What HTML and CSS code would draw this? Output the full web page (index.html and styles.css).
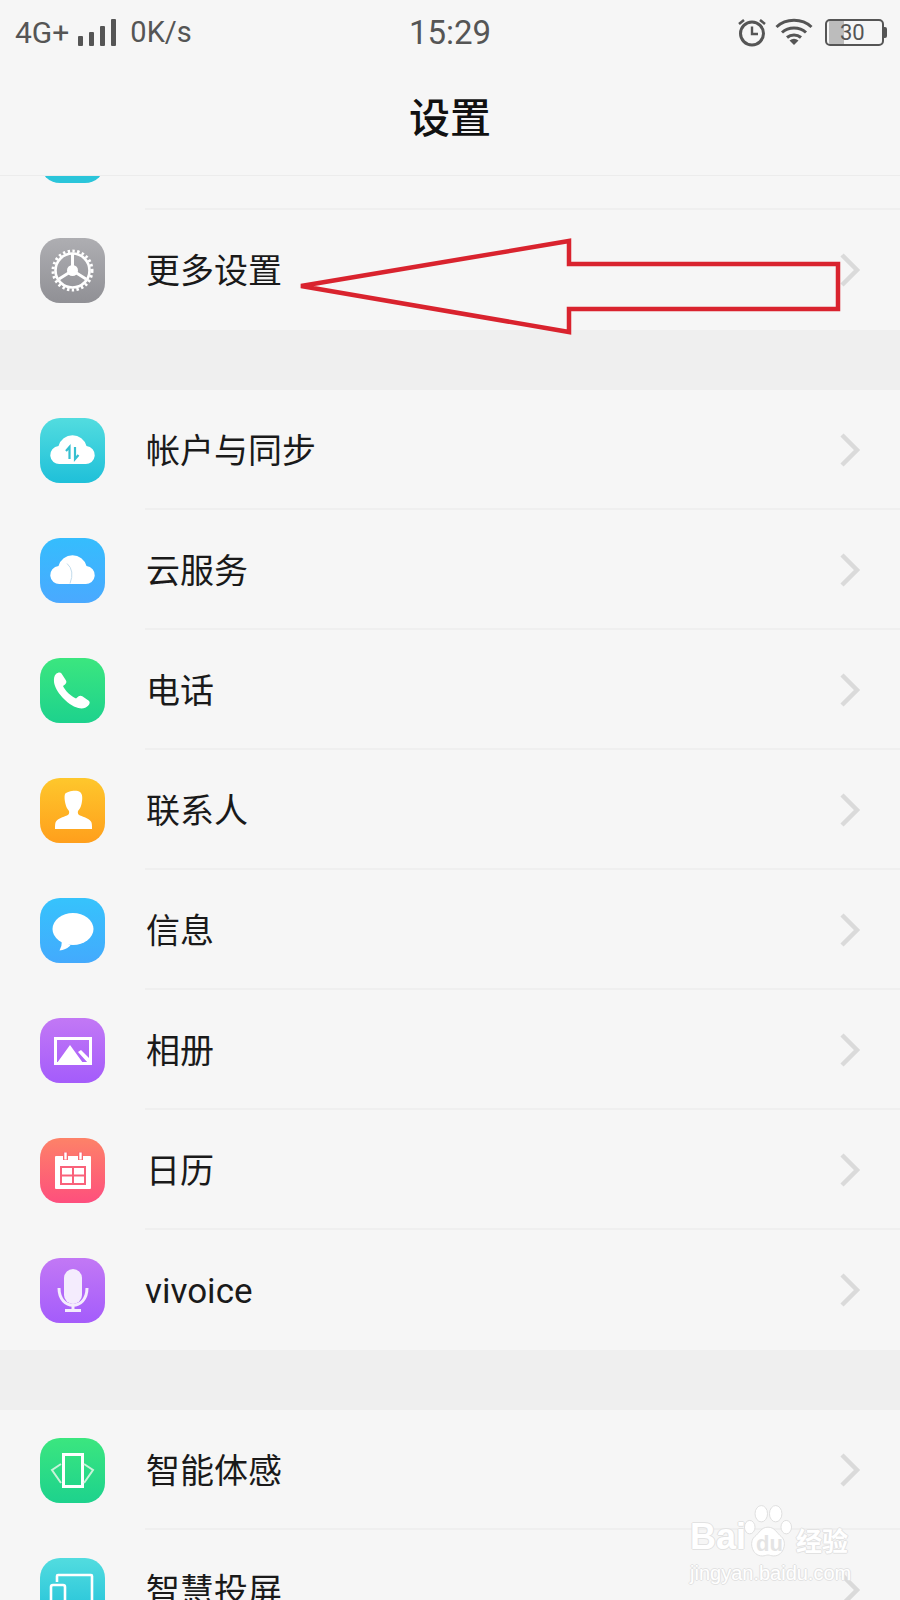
FILE: index.html
```html
<!DOCTYPE html>
<html>
  <head>
    <title>设置</title>
    <link rel="stylesheet" href="styles.css">
  </head>
  <body>
    <div class="screen">
      <div class="status-bar">
        <div class="status-left">
          <span class="net-type">4G+</span>
          <div class="signal">
            <i class="bar bar1"></i>
            <i class="bar bar2"></i>
            <i class="bar bar3"></i>
            <i class="bar bar4"></i>
          </div>
          <span class="net-speed">0K/s</span>
        </div>
        <div class="clock">15:29</div>
        <div class="status-right">
          <svg class="alarm" width="30" height="30" viewBox="0 0 30 30">
            <circle cx="15" cy="16.5" r="11.5" fill="none" stroke="#555" stroke-width="3"/>
            <path d="M15 9.5v7.5h6" fill="none" stroke="#555" stroke-width="2.4"/>
            <path d="M2 7l5-4M28 7l-5-4" fill="none" stroke="#555" stroke-width="2.6"/>
          </svg>
          <svg class="wifi" width="38" height="28" viewBox="0 0 38 28">
            <path d="M1.5 9C11 0 27 0 36.5 9" fill="none" stroke="#555" stroke-width="3"/>
            <path d="M7 14.5C13.5 8.5 24.5 8.5 31 14.5" fill="none" stroke="#555" stroke-width="3"/>
            <path d="M12 19.5C16 16 22 16 26 19.5" fill="none" stroke="#555" stroke-width="3"/>
            <path d="M14.5 22.5Q19 19 23.5 22.5L19 27z" fill="#555"/>
          </svg>
          <div class="battery">
            <div class="battery-body">
              <div class="battery-fill"></div>
              <span class="battery-num">30</span>
            </div>
            <div class="battery-cap"></div>
          </div>
        </div>
      </div>

      <div class="title-bar">设置</div>

      <div class="scroll-area">
        <div class="section first-section">
          <div class="row">
            <div class="icon icon-teal"></div>
            <div class="row-label"></div>
          </div>
          <div class="row last-row">
            <div class="icon icon-gray">
              <svg width="65" height="65" viewBox="0 0 65 65">
                <circle cx="32.5" cy="32.5" r="17" fill="none" stroke="#fff" stroke-width="2.6"/>
                <circle cx="32.5" cy="32.5" r="19.5" fill="none" stroke="#fff" stroke-width="3" stroke-dasharray="2.4 2.4"/>
                <path d="M32.5 16v16.5M32.5 32.5L19 41M32.5 32.5L46 41" fill="none" stroke="#fff" stroke-width="3"/>
                <circle cx="32.5" cy="32.5" r="5.5" fill="#fff"/>
              </svg>
            </div>
            <div class="row-label">更多设置</div>
            <svg class="chevron" width="22" height="36" viewBox="0 0 22 36"><path d="M3 3l15 15L3 33" fill="none" stroke="#dadada" stroke-width="4.5"/></svg>
          </div>
        </div>

        <div class="section">
          <div class="row">
            <div class="icon icon-aqua">
              <svg width="65" height="65" viewBox="0 0 65 65">
                <path d="M20 46a9 9 0 0 1-1.5-18 14.5 14.5 0 0 1 28 0 9 9 0 0 1-1.5 18z" fill="#fff"/>
                <path d="M29.5 41V29l-3.500 4M35 29v12l3.500-4" fill="none" stroke="#35bfd0" stroke-width="2.2"/>
              </svg>
            </div>
            <div class="row-label">帐户与同步</div>
            <svg class="chevron" width="22" height="36" viewBox="0 0 22 36"><path d="M3 3l15 15L3 33" fill="none" stroke="#dadada" stroke-width="4.5"/></svg>
          </div>
          <div class="row">
            <div class="icon icon-sky">
              <svg width="65" height="65" viewBox="0 0 65 65">
                <path d="M20 46a9 9 0 0 1-1.5-18 14.5 14.5 0 0 1 28 0 9 9 0 0 1-1.5 18z" fill="#fff"/>
                <path d="M27 25.5q8 7 3 20" fill="none" stroke="#c3dcec" stroke-width="1"/>
              </svg>
            </div>
            <div class="row-label">云服务</div>
            <svg class="chevron" width="22" height="36" viewBox="0 0 22 36"><path d="M3 3l15 15L3 33" fill="none" stroke="#dadada" stroke-width="4.5"/></svg>
          </div>
          <div class="row">
            <div class="icon icon-green">
              <svg width="65" height="65" viewBox="0 0 65 65">
                <path d="M16 16c2-1.800 4.500-2 5.500-.5l4.500 7c.8 1.400.3 2.800-1 4l-2 1.500c2 4.500 8 10.500 13 12.500l2.300-2c1.200-1 2.800-1.200 4-.3l6.500 4.500c1.300 1 1.200 3-.5 4.800-2.500 2.700-6 3.500-10 2.500C27 47 15 33 14 24c-.2-3.500 0-6 2-8z" fill="#fff"/>
              </svg>
            </div>
            <div class="row-label">电话</div>
            <svg class="chevron" width="22" height="36" viewBox="0 0 22 36"><path d="M3 3l15 15L3 33" fill="none" stroke="#dadada" stroke-width="4.5"/></svg>
          </div>
          <div class="row">
            <div class="icon icon-orange">
              <svg width="65" height="65" viewBox="0 0 65 65">
                <path d="M25 16c2-3 12-4.500 15-2 3 2 2.500 8 1.500 12-.5 3-2 5-3.500 7-.5 2 0 3.500 2 4.500 4 1.500 9 3 11 6 1 1.500 1 4 1 7.500H15c0-3.500 0-6 1-7.500 2-3 7-4.500 11-6 2-1 2.500-2.500 2-4.500-1.500-2-3-4-3.500-7C25 24 24 19 25 16z" fill="#fff"/>
              </svg>
            </div>
            <div class="row-label">联系人</div>
            <svg class="chevron" width="22" height="36" viewBox="0 0 22 36"><path d="M3 3l15 15L3 33" fill="none" stroke="#dadada" stroke-width="4.5"/></svg>
          </div>
          <div class="row">
            <div class="icon icon-blue">
              <svg width="65" height="65" viewBox="0 0 65 65">
                <ellipse cx="33" cy="31" rx="20.5" ry="16" fill="#fff"/>
                <path d="M22 42q0 6-2.500 10.500 6-.5 11-5z" fill="#fff"/>
              </svg>
            </div>
            <div class="row-label">信息</div>
            <svg class="chevron" width="22" height="36" viewBox="0 0 22 36"><path d="M3 3l15 15L3 33" fill="none" stroke="#dadada" stroke-width="4.5"/></svg>
          </div>
          <div class="row">
            <div class="icon icon-violet">
              <svg width="65" height="65" viewBox="0 0 65 65">
                <path d="M15.5 20.5h35v25h-35z" fill="none" stroke="#fff" stroke-width="3"/>
                <path d="M17 45l13-18 13 18zM38 34l3-2 8 8v5h-1z" fill="#fff"/>
              </svg>
            </div>
            <div class="row-label">相册</div>
            <svg class="chevron" width="22" height="36" viewBox="0 0 22 36"><path d="M3 3l15 15L3 33" fill="none" stroke="#dadada" stroke-width="4.5"/></svg>
          </div>
          <div class="row">
            <div class="icon icon-red">
              <svg width="65" height="65" viewBox="0 0 65 65">
                <path d="M16 18h34a1 1 0 0 1 1 1v31a1 1 0 0 1-1 1H16a1 1 0 0 1-1-1V19a1 1 0 0 1 1-1z" fill="#fff"/>
                <path d="M25.5 14v8M40.5 14v8" stroke="#f9686f" stroke-width="5"/>
                <path d="M25.5 14.500v7M40.5 14.500v7" stroke="#fff" stroke-width="2.4"/>
                <path d="M20 28h26v19H20z" fill="#f9627a"/>
                <path d="M22 30h10v6.500H22zM34 30h10v6.500H34zM22 38.500h10V45H22zM34 38.500h10V45H34z" fill="#fff"/>
              </svg>
            </div>
            <div class="row-label">日历</div>
            <svg class="chevron" width="22" height="36" viewBox="0 0 22 36"><path d="M3 3l15 15L3 33" fill="none" stroke="#dadada" stroke-width="4.5"/></svg>
          </div>
          <div class="row last-row">
            <div class="icon icon-violet">
              <svg width="65" height="65" viewBox="0 0 65 65">
                <rect x="24" y="11" width="18" height="35" rx="9" fill="#f4ecfd"/>
                <path d="M19 30c0 23 28 23 28 0" fill="none" stroke="#f4ecfd" stroke-width="3"/>
                <path d="M33 47v5M25 52.500h16" fill="none" stroke="#f4ecfd" stroke-width="3"/>
              </svg>
            </div>
            <div class="row-label latin">vivoice</div>
            <svg class="chevron" width="22" height="36" viewBox="0 0 22 36"><path d="M3 3l15 15L3 33" fill="none" stroke="#dadada" stroke-width="4.5"/></svg>
          </div>
        </div>

        <div class="section">
          <div class="row">
            <div class="icon icon-green">
              <svg width="65" height="65" viewBox="0 0 65 65">
                <rect x="23.5" y="16.5" width="19" height="32" fill="none" stroke="#fff" stroke-width="3"/>
                <path d="M21 26l-9 6 9 13M44 26l9 6-9 13" fill="none" stroke="#c8f3d9" stroke-width="2"/>
              </svg>
            </div>
            <div class="row-label">智能体感</div>
            <svg class="chevron" width="22" height="36" viewBox="0 0 22 36"><path d="M3 3l15 15L3 33" fill="none" stroke="#dadada" stroke-width="4.5"/></svg>
          </div>
          <div class="row">
            <div class="icon icon-aqua">
              <svg width="65" height="65" viewBox="0 0 65 65">
                <path d="M17 24v-6a1 1 0 0 1 1-1h33a1 1 0 0 1 1 1v27h-23" fill="none" stroke="#fff" stroke-width="2.6"/>
                <rect x="11" y="27" width="14" height="26" rx="2" fill="none" stroke="#fff" stroke-width="2.6"/>
              </svg>
            </div>
            <div class="row-label">智慧投屏</div>
            <svg class="chevron" width="22" height="36" viewBox="0 0 22 36"><path d="M3 3l15 15L3 33" fill="none" stroke="#dadada" stroke-width="4.5"/></svg>
          </div>
        </div>
      </div>

      <svg class="red-arrow" width="900" height="340" viewBox="0 0 900 340">
        <path d="M301 286L569 241V264H838V309H569V332z" fill="none" stroke="#d9232e" stroke-width="4.5"/>
      </svg>

      <div class="watermark">
        <div class="wm-top">
          <span class="wm-bai">Bai</span>
          <svg class="wm-paw" width="48" height="52" viewBox="0 0 50 54">
            <g fill="#fff" stroke="#dedede" stroke-width="1">
              <ellipse cx="6" cy="23" rx="5.5" ry="7"/>
              <ellipse cx="18" cy="9" rx="6.5" ry="8.5"/>
              <ellipse cx="33" cy="9" rx="6.5" ry="8.5"/>
              <ellipse cx="44" cy="23" rx="5.5" ry="7"/>
              <path d="M25 23c7 0 9 6 14 10 6 5 3 20-8 20-3 0-4-1-6-1s-3 1-6 1C8 53 5 38 11 33c5-4 7-10 14-10z"/>
            </g>
          </svg>
          <span class="wm-du">du</span>
          <span class="wm-jy">经验</span>
        </div>
        <div class="wm-url">jingyan.baidu.com</div>
      </div>
    </div>
  </body>
</html>
```

FILE: styles.css
```css
html,
body {
  margin: 0;
  padding: 0;
}

body {
  font-family: "Noto Sans CJK SC", "Noto Sans", sans-serif;
  background-color: #f6f6f6;
}

.screen {
  position: relative;
  width: 900px;
  height: 1600px;
  overflow: hidden;
  display: flex;
  flex-direction: column;
  background-color: #f6f6f6;
}

/* status bar */
.status-bar {
  height: 64px;
  padding: 0 15px;
  display: grid;
  grid-template-columns: 1fr auto 1fr;
  align-items: center;
  color: #555;
  font-family: Roboto, sans-serif;
}

.status-left {
  display: flex;
  align-items: center;
}

.net-type {
  font-size: 30px;
}

.signal {
  display: flex;
  align-items: flex-end;
  gap: 6px;
  height: 27px;
  margin-left: 9px;
}

.bar {
  display: block;
  width: 5px;
  background-color: #555;
  border-radius: 1px;
}

.bar1 {
  height: 10px;
}

.bar2 {
  height: 14px;
}

.bar3 {
  height: 20px;
}

.bar4 {
  height: 27px;
}

.net-speed {
  font-size: 29px;
  margin-left: 14px;
}

.clock {
  font-size: 33px;
}

.status-right {
  display: flex;
  align-items: center;
  justify-content: flex-end;
  gap: 8px;
  margin-right: -2px;
}

.battery {
  display: flex;
  align-items: center;
  margin-left: 4px;
}

.battery-body {
  position: relative;
  width: 55px;
  height: 23px;
  border: 2px solid #555;
  border-radius: 5px;
}

.battery-fill {
  width: 15px;
  height: 100%;
  margin-left: 2px;
  background-color: #bcbcbc;
}

.battery-num {
  position: absolute;
  top: 0;
  left: 13px;
  font-size: 22px;
  line-height: 23px;
}

.battery-cap {
  width: 3px;
  height: 11px;
  background-color: #555;
  border-radius: 0 2px 2px 0;
}

/* title */
.title-bar {
  height: 102px;
  padding-bottom: 9px;
  border-bottom: 1px solid #ececec;
  display: flex;
  align-items: center;
  justify-content: center;
  font-size: 41px;
  font-weight: 500;
  color: #111;
  position: relative;
  z-index: 1;
  background-color: #f6f6f6;
}

/* list */
.scroll-area {
  flex: 1;
  overflow: hidden;
}

.first-section {
  margin-top: -86px;
}

.section {
  padding-bottom: 60px;
  background-color: #efefef;
}

.section:last-child {
  padding-bottom: 0;
}

.row {
  height: 120px;
  box-sizing: border-box;
  padding-left: 40px;
  padding-right: 40px;
  display: flex;
  align-items: center;
  background-color: #f6f6f6;
  position: relative;
}

.row::after {
  content: "";
  position: absolute;
  left: 145px;
  right: 0;
  bottom: 0;
  height: 2px;
  background-color: #efefef;
}

.last-row::after {
  display: none;
}

.icon {
  width: 65px;
  height: 65px;
  flex-shrink: 0;
  border-radius: 20px;
}

.icon svg {
  display: block;
}

.icon-teal {
  background: #2ac5da;
}

.icon-gray {
  background: linear-gradient(#aeaeb2, #909095);
}

.icon-aqua {
  background: linear-gradient(#52dcdf, #1fc0d9);
}

.icon-sky {
  background: linear-gradient(#35bdfd, #4aa9ff);
}

.icon-green {
  background: linear-gradient(#3be67f, #1dd28d);
}

.icon-orange {
  background: linear-gradient(#fec72c, #ff9f1c);
}

.icon-blue {
  background: linear-gradient(#36c3fc, #43aafd);
}

.icon-violet {
  background: linear-gradient(#c278f5, #a45cfb);
}

.icon-red {
  background: linear-gradient(#fd8268, #fe4f7d);
}

.row-label {
  flex: 1;
  margin-left: 41px;
  padding-bottom: 4px;
  font-size: 34px;
  color: #1a1a1a;
}

.latin {
  margin-left: 40px;
  padding-bottom: 0;
  padding-top: 2px;
  font-family: Roboto, sans-serif;
  font-size: 35px;
}

.chevron {
  margin-right: -1px;
}

/* red arrow drawn over the screenshot */
.red-arrow {
  position: absolute;
  top: 0;
  left: 0;
  z-index: 2;
}

/* watermark */
.watermark {
  position: absolute;
  left: 690px;
  top: 1503px;
  width: 170px;
  z-index: 2;
  color: #fff;
}

.wm-top {
  display: flex;
  align-items: flex-end;
  height: 54px;
  font-family: "Liberation Sans", sans-serif;
  font-weight: bold;
  font-size: 36px;
  line-height: 40px;
  text-shadow: -1px 0 #e2e2e2, 1px 0 #e2e2e2, 0 -1px #e2e2e2, 0 1px #e2e2e2;
}

.wm-paw {
  margin-left: -2px;
}

.wm-du {
  position: absolute;
  left: 66px;
  top: 28px;
  font-size: 22px;
  line-height: 26px;
  text-shadow: none;
  color: #e4e4e4;
}

.wm-jy {
  margin-left: 4px;
  font-family: "Noto Sans CJK SC", sans-serif;
  font-size: 26px;
  line-height: 34px;
}

.wm-url {
  margin-top: 4px;
  font-family: "Liberation Sans", sans-serif;
  font-size: 20px;
  line-height: 24px;
  text-shadow: -1px 0 #e2e2e2, 1px 0 #e2e2e2, 0 -1px #e2e2e2, 0 1px #e2e2e2;
}
```
